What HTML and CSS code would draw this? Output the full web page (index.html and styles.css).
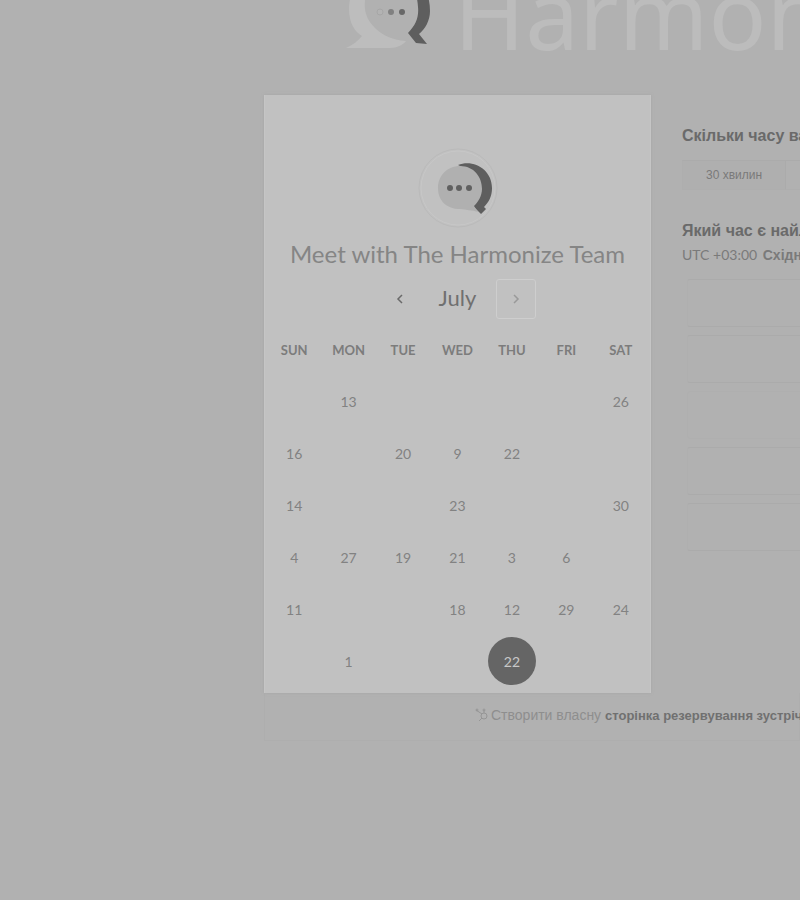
FILE: index.html
```html
<!DOCTYPE html>
<html lang="uk">
<head>
<meta charset="utf-8">
<meta name="viewport" content="width=device-width, initial-scale=1">
<title>Harmonize</title>
<link rel="stylesheet" href="styles.css">
</head>
<body>
<header class="brand">
  <svg class="brand-mark" viewBox="0 0 90 96" aria-hidden="true">
    <path class="mark-light" d="M44 12C18 14 5 36 5 56C5 70 11 79 18 83C14 88 9 92 2 95H46C53 95 59 92 62 88C48 87 38 82 31 75C22 66 20 58 21 47C22 32 30 18 44 12Z"/>
    <path class="mark-dark" d="M50 12C74 12 86 38 86 58C86 68 81 76 75 81L83 91L72 90L64 80C72 72 75 64 74 54C73 36 64 20 50 12Z"/>
    <circle class="mark-dot faint" cx="36" cy="59" r="3"/>
    <circle class="mark-dot" cx="47" cy="59" r="3"/>
    <circle class="mark-dot strong" cx="58" cy="59" r="3"/>
  </svg>
  <span class="brand-name">Harmonize</span>
</header>
<main class="booking">
  <section class="card">
    <svg class="avatar" viewBox="0 0 80 80" aria-hidden="true">
      <circle class="ring" cx="40" cy="40" r="39"/>
      <circle class="ring inner" cx="40" cy="40" r="37"/>
      <path class="mark-dark" d="M40 17C56 11 74 22 74 40C74 48 71 54 66 59L68 61L63 66L55 58C64 48 63 27 40 17Z"/>
      <path class="bubble" d="M42 18C56 18 64 29 64 41C64 48 60 54 56 58L60 64C54 62 48 62 42 61C29 61 20 53 20 40C20 28 29 18 42 18Z"/>
      <circle class="mark-dot" cx="32" cy="40" r="3"/>
      <circle class="mark-dot" cx="41" cy="40" r="3"/>
      <circle class="mark-dot" cx="51" cy="40" r="3"/>
    </svg>
    <h1>Meet with The Harmonize Team</h1>
    <div class="month">
      <button type="button" class="step" aria-label="Попередній місяць"><svg viewBox="0 0 12 12"><path d="M8 2L4 6L8 10"/></svg></button>
      <h2>July</h2>
      <button type="button" class="step next" aria-label="Наступний місяць"><svg viewBox="0 0 12 12"><path d="M4 2L8 6L4 10"/></svg></button>
    </div>
    <table class="days">
      <thead><tr><th>SUN</th><th>MON</th><th>TUE</th><th>WED</th><th>THU</th><th>FRI</th><th>SAT</th></tr></thead>
      <tbody>
        <tr><td></td><td>13</td><td></td><td></td><td></td><td></td><td>26</td></tr>
        <tr><td>16</td><td></td><td>20</td><td>9</td><td>22</td><td></td><td></td></tr>
        <tr><td>14</td><td></td><td></td><td>23</td><td></td><td></td><td>30</td></tr>
        <tr><td>4</td><td>27</td><td>19</td><td>21</td><td>3</td><td>6</td><td></td></tr>
        <tr><td>11</td><td></td><td></td><td>18</td><td>12</td><td>29</td><td>24</td></tr>
        <tr><td></td><td>1</td><td></td><td></td><td><button type="button" class="selected">22</button></td><td></td><td></td></tr>
      </tbody>
    </table>
  </section>
  <section class="times">
    <h3>Скільки часу вам потрібно?</h3>
    <div class="durations"><button type="button">30 хвилин</button><button type="button">60 хвилин</button></div>
    <h3>Який час є найлучшим?</h3>
    <p class="zone">UTC +03:00 <b>Східноєвропейський час</b></p>
    <ul class="slots">
      <li></li><li></li><li class="soft"></li><li></li><li></li>
    </ul>
  </section>
</main>
<footer class="credit">
  <svg viewBox="0 0 14 14" aria-hidden="true"><path d="M1 2L7 6M9 2V5M7 10L4 13"/><circle cx="9" cy="8" r="3"/><circle cx="2" cy="2" r="1"/><circle cx="9" cy="2" r="1"/></svg>
  <span>Створити власну <a href="#">сторінка резервування зустрічей</a></span>
</footer>
</body>
</html>
```
FILE: styles.css
```css
* { box-sizing: border-box; }
body {
  margin: 0;
  background: #b1b1b1;
  color: #7a7a7a;
  font-family: "Liberation Sans", sans-serif;
  overflow-x: hidden;
}
h1, h2, h3, p, ul { margin: 0; padding: 0; font-weight: 400; }
button { font: inherit; color: inherit; background: none; border: 0; padding: 0; }

.brand {
  display: flex;
  align-items: flex-end;
  gap: 20px;
  height: 95px;
  padding: 0 0 46px 43%;
  overflow: hidden;
  white-space: nowrap;
}
.brand-mark { flex: none; width: 90px; height: 96px; }
.brand-name { font: 400 96px/72px "Noto Sans", sans-serif; color: #bcbcbc; }
.mark-light { fill: #bdbdbd; }
.mark-dark { fill: #5e5e5e; }
.mark-dot { fill: #606060; }
.brand .mark-dot { fill: #808080; }
.brand .strong { fill: #686868; }
.brand .faint { fill: #b3b3b3; stroke: #a6a6a6; }

.booking {
  display: grid;
  grid-template-columns: 387px minmax(460px, 1fr);
  margin-left: 33%;
}
.card {
  display: flex;
  flex-direction: column;
  align-items: center;
  padding: 53px 2px 6px;
  background: #c1c1c1;
  border: 1px solid #c5c5c5;
  border-width: 0 1px;
  box-shadow: 0 0 3px #a6a6a6;
  font-family: Lato, sans-serif;
}
.avatar { width: 80px; height: 80px; }
.ring { fill: none; stroke: #bababa; }
.inner { stroke: #c7c7c7; }
.bubble { fill: #b0b0b0; }
h1 { margin-top: 11px; font-size: 24px; line-height: 30px; white-space: nowrap; color: #858585; }
.month {
  display: grid;
  grid-template-columns: 40px 76px 40px;
  align-items: center;
  margin-top: 10px;
  text-align: center;
}
h2 { font-size: 22px; line-height: 30px; padding-bottom: 2px; color: #707070; }
.step { display: grid; place-items: center; height: 40px; }
.step svg { width: 12px; height: 12px; fill: none; stroke: #6a6a6a; stroke-width: 1.5; }
.next { border: 1px solid #cecece; border-radius: 3px; }
.next svg { stroke: #999; }
.days { width: 100%; margin-top: 5px; border-collapse: collapse; table-layout: fixed; font-size: 14px; }
.days th, .days td { height: 52px; padding: 0; text-align: center; }
.days th { height: 51px; font-size: 13px; font-weight: 700; color: #7c7c7c; }
.days td { color: #828282; }
.days .selected { width: 48px; height: 48px; border-radius: 50%; background: #656565; color: #c8c8c8; display: block; margin: auto; }

.times { padding: 31px 0 0 31px; white-space: nowrap; }
h3 { font-size: 16px; line-height: 20px; font-weight: 700; color: #6a6a6a; }
.durations { display: flex; margin: 14px 0 31px; font-size: 12px; }
.durations button { width: 104px; height: 30px; border: 1px solid #ababab; border-left-color: #aeaeae; border-bottom-color: #aeaeae; background: #afafaf; }
.durations button + button { border-left: 0; background: none; }
.zone { margin-top: 3px; font: 14px/22px Lato, "Liberation Sans", sans-serif; }
.zone b { padding-left: 2px; font-family: "Liberation Sans", sans-serif; }
.slots { display: grid; gap: 8px; margin: 13px 0 0 5px; list-style: none; }
.slots li { height: 48px; border: 1px solid #ababab; border-left-color: #afafaf; border-radius: 3px; }
.slots .soft { border-color: #afafaf; }

.credit {
  display: flex;
  align-items: center;
  gap: 2px;
  height: 48px;
  margin-left: 33%;
  padding: 0 0 3px 210px;
  border: 1px solid #aeaeae;
  border-top: 0;
  font-size: 14px;
  white-space: nowrap;
  color: #8e8e8e;
}
.credit svg { flex: none; width: 14px; height: 14px; fill: none; stroke: #959595; }
.credit a { font-weight: 700; font-size: 13px; color: #707070; text-decoration: none; }
```
